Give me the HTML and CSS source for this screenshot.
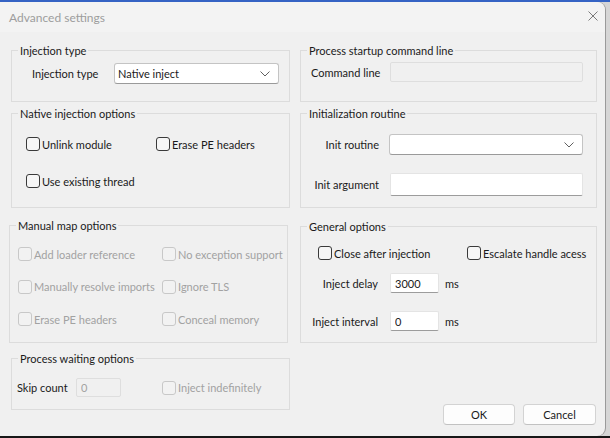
FILE: index.html
```html
<!DOCTYPE html>
<html lang="en">
  <head>
    <meta charset="UTF-8" />
    <meta name="viewport" content="width=device-width, initial-scale=1.0" />
    <title>Advanced settings</title>
    <link rel="stylesheet" href="styles.css">
  </head>
  <body>
    <main class="dialog">
      <header class="title-bar">
        <span class="title-text">Advanced settings</span>
        <button class="close-button" aria-label="Close">
          <svg width="10" height="10" viewBox="0 0 10 10">
            <path d="M0.5 0.5 L9.5 9.5 M9.5 0.5 L0.5 9.5" stroke="#7a7a7a" stroke-width="1" fill="none" />
          </svg>
        </button>
      </header>

      <div class="dialog-body">
        <div class="column is-left">
          <section class="group is-short">
            <span class="group-title">Injection type</span>
            <div class="field-row injection-row">
              <label class="field-label">Injection type</label>
              <div class="combo is-injection">
                <span>Native inject</span>
                <svg width="10" height="6" viewBox="0 0 10 6">
                  <path d="M0.5 0.5 L5 5 L9.5 0.5" stroke="#606060" fill="none" />
                </svg>
              </div>
            </div>
          </section>

          <section class="group is-tall native-group">
            <span class="group-title">Native injection options</span>
            <div class="check-grid native-grid">
              <label class="check"><input type="checkbox" />Unlink module</label>
              <label class="check"><input type="checkbox" />Erase PE headers</label>
              <label class="check"><input type="checkbox" />Use existing thread</label>
            </div>
          </section>

          <section class="group manual-group is-disabled">
            <span class="group-title">Manual map options</span>
            <div class="check-grid manual-grid">
              <label class="check"><input type="checkbox" disabled />Add loader reference</label>
              <label class="check"><input type="checkbox" disabled />No exception support</label>
              <label class="check"><input type="checkbox" disabled />Manually resolve imports</label>
              <label class="check"><input type="checkbox" disabled />Ignore TLS</label>
              <label class="check"><input type="checkbox" disabled />Erase PE headers</label>
              <label class="check"><input type="checkbox" disabled />Conceal memory</label>
            </div>
          </section>

          <section class="group is-short waiting-group">
            <span class="group-title">Process waiting options</span>
            <div class="field-row waiting-row">
              <label class="field-label skip-label">Skip count</label>
              <input class="edit is-skip" type="text" value="0" disabled />
              <label class="check is-muted"><input type="checkbox" disabled />Inject indefinitely</label>
            </div>
          </section>
        </div>

        <div class="column is-right">
          <section class="group is-short">
            <span class="group-title">Process startup command line</span>
            <div class="field-row command-row">
              <label class="field-label command-label">Command line</label>
              <input class="edit is-command" type="text" disabled />
            </div>
          </section>

          <section class="group is-tall">
            <span class="group-title">Initialization routine</span>
            <div class="init-grid">
              <label class="field-label">Init routine</label>
              <div class="combo is-init">
                <span></span>
                <svg width="10" height="6" viewBox="0 0 10 6">
                  <path d="M0.5 0.5 L5 5 L9.5 0.5" stroke="#606060" fill="none" />
                </svg>
              </div>
              <label class="field-label">Init argument</label>
              <input class="edit is-argument" type="text" />
            </div>
          </section>

          <section class="group general-group">
            <span class="group-title">General options</span>
            <div class="check-grid general-grid">
              <label class="check"><input type="checkbox" />Close after injection</label>
              <label class="check"><input type="checkbox" />Escalate handle acess</label>
            </div>
            <div class="field-row delay-row">
              <label class="field-label general-label">Inject delay</label>
              <input class="edit is-number" type="text" value="3000" />
              <span class="unit">ms</span>
            </div>
            <div class="field-row interval-row">
              <label class="field-label general-label">Inject interval</label>
              <input class="edit is-number" type="text" value="0" />
              <span class="unit">ms</span>
            </div>
          </section>

          <footer class="button-row">
            <button class="dialog-button is-ok">OK</button>
            <button class="dialog-button is-cancel">Cancel</button>
          </footer>
        </div>
      </div>
    </main>
  </body>
</html>
```

FILE: styles.css
```css
:root {
  --dialog-bg: #f0f0f0;
  --title-bg: #f3f3f3;
  --group-border: #dcdcdc;
  --text-color: #1a1a1a;
  --muted-text: #a2a2a2;
}

*,
*::before,
*::after {
  box-sizing: border-box;
  margin: 0;
  padding: 0;
}

body {
  font-family: Lato, "Liberation Sans", sans-serif;
  font-size: 11px;
  color: var(--text-color);
  width: 610px;
  height: 438px;
  overflow: hidden;
  background: linear-gradient(
    to bottom,
    #3563c4 0,
    #3563c4 2px,
    #d6d6d6 2px,
    #d6d6d6 436px,
    #171717 436px
  );
}

.dialog {
  margin-top: 2px;
  width: 605px;
  height: 434px;
  background-color: var(--dialog-bg);
  border-radius: 0 8px 8px 0;
  box-shadow: 1px 0 0 #9a9a9a;
  overflow: hidden;
}

.title-bar {
  height: 30px;
  background-color: var(--title-bg);
  display: flex;
  align-items: center;
  justify-content: space-between;
  padding-left: 9px;
}

.title-text {
  color: #9d9d9d;
  font-size: 12px;
}

.close-button {
  border: none;
  background: none;
  width: 24px;
  height: 30px;
  display: flex;
  align-items: center;
  justify-content: center;
  padding-bottom: 2px;
}

.dialog-body {
  display: flex;
  gap: 10px;
  padding: 18px 0 0 11px;
}

.column {
  display: flex;
  flex-direction: column;
}

.column.is-left {
  width: 279px;
}

.column.is-right {
  width: 297px;
}

.group {
  position: relative;
  border: 1px solid var(--group-border);
}

.group + .group {
  margin-top: 11px;
}

.group-title {
  position: absolute;
  top: -8px;
  left: 6px;
  padding: 0 2px;
  line-height: 15px;
  background-color: var(--dialog-bg);
  color: var(--text-color);
  white-space: nowrap;
}

.group.is-short {
  height: 52px;
}

.group.is-tall {
  height: 95px;
}

.field-row {
  display: flex;
  align-items: center;
}

.field-label {
  white-space: nowrap;
}

.injection-row {
  padding: 12px 0 0 20px;
}

.injection-row .field-label {
  width: 82px;
}

.combo {
  height: 21px;
  background-color: #ffffff;
  border: 1px solid #c4c4c4;
  border-bottom-color: #9a9a9a;
  border-radius: 3px;
  display: flex;
  align-items: center;
  justify-content: space-between;
  padding: 0 8px 0 3px;
}

.combo.is-injection {
  width: 165px;
}

.combo.is-init {
  width: 194px;
}

.edit {
  font: inherit;
  color: var(--text-color);
  background-color: #ffffff;
  border: 1px solid #e4e4e4;
  border-bottom-color: #9c9c9c;
  border-radius: 2px;
  padding: 0 4px;
  outline: none;
}

.edit:disabled {
  background-color: transparent;
  border-color: #dedede;
  color: var(--muted-text);
}

.command-row {
  padding: 11px 0 0 10px;
}

.command-label {
  width: 79px;
}

.edit.is-command {
  width: 193px;
  height: 20px;
}

.check-grid {
  display: grid;
  grid-auto-rows: 16px;
}

.check {
  display: flex;
  align-items: center;
  gap: 2px;
  white-space: nowrap;
}

.check input {
  appearance: none;
  width: 14px;
  height: 14px;
  border: 1px solid #3a3a3a;
  border-radius: 3px;
  background-color: #f6f6f6;
  flex-shrink: 0;
}

.check input:disabled {
  border-color: #c8c8c8;
  background-color: #f2f2f2;
}

.is-disabled .check,
.check.is-muted {
  color: var(--muted-text);
}

.native-grid {
  grid-template-columns: 130px auto;
  row-gap: 21px;
  padding: 22px 0 0 14px;
}

.manual-group {
  height: 118px;
  width: 279px;
  margin-left: -2px;
}

.group + .manual-group {
  margin-top: 17px;
}

.manual-grid {
  grid-template-columns: 144px auto;
  row-gap: 16.5px;
  padding: 20px 0 0 8px;
}

.group + .waiting-group {
  margin-top: 15px;
}

.waiting-row {
  padding: 19px 0 0 5px;
}

.skip-label {
  width: 59px;
}

.edit.is-skip {
  width: 45px;
  height: 19px;
}

.waiting-row .check {
  margin-left: 41px;
}

.init-grid {
  display: grid;
  grid-template-columns: 78px 194px;
  column-gap: 10px;
  row-gap: 18px;
  align-items: center;
  padding-top: 20px;
}

.init-grid .field-label {
  justify-self: end;
}

.edit.is-argument {
  width: 193px;
  height: 23px;
  margin-left: 1px;
}

.general-group {
  height: 117px;
}

.group + .general-group {
  margin-top: 18px;
}

.general-grid {
  grid-template-columns: 149px auto;
  padding: 18px 0 0 17px;
}

.general-label {
  width: 77px;
  text-align: right;
  margin-right: 12px;
}

.delay-row {
  margin-top: 12px;
}

.interval-row {
  margin-top: 18px;
}

.edit.is-number {
  width: 49px;
  height: 20px;
}

.unit {
  margin-left: 6px;
}

.button-row {
  display: flex;
  justify-content: flex-end;
  gap: 8px;
  margin-top: 61px;
  padding-right: 1px;
}

.dialog-button {
  font: inherit;
  color: var(--text-color);
  height: 21px;
  background-color: #fdfdfd;
  border: 1px solid #d3d3d3;
  border-bottom-color: #c2c2c2;
  border-radius: 4px;
}

.dialog-button.is-ok {
  width: 72px;
}

.dialog-button.is-cancel {
  width: 73px;
}
```
